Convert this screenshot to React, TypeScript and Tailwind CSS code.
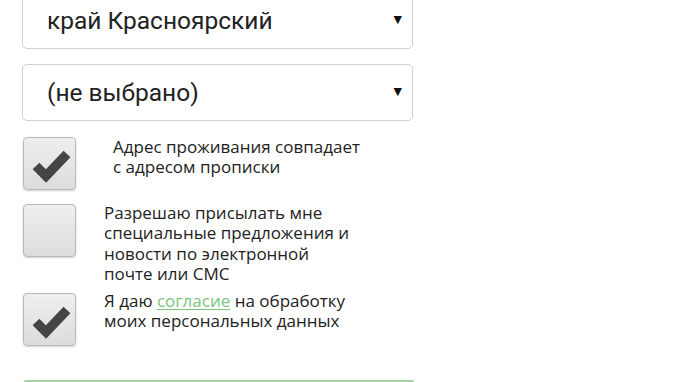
import React from "react";

function Check() {
  return (
    <svg width="53" height="53" viewBox="0 0 53 53" className="absolute left-0 top-0">
      <polyline
        points="12,28 22,38 43,16"
        fill="none"
        stroke="#444444"
        strokeWidth="9.5"
        strokeLinejoin="miter"
        strokeLinecap="butt"
      />
    </svg>
  );
}

function Box({ checked }: { checked?: boolean }) {
  return (
    <div className="relative w-[53px] h-[53px] shrink-0 rounded-[4px] border border-[#b9b9b9] bg-gradient-to-b from-[#efefef] to-[#dcdcdc] shadow-[0_1px_2px_rgba(0,0,0,0.18)]">
      {checked && <Check />}
    </div>
  );
}

function Select({ label, className }: { label: string; className?: string }) {
  return (
    <div
      className={
        "flex items-center justify-between h-[57px] w-[391px] rounded-[5px] border border-[#cfcfcf] bg-white pl-[24px] pr-[10px] " +
        (className ?? "")
      }
    >
      <span className="font-['Roboto',sans-serif] text-[24.5px] text-[#222] pt-[1px]">{label}</span>
      <span className="text-[11px] text-[#111] font-['DejaVu_Sans',sans-serif]">▼</span>
    </div>
  );
}

export default function App() {
  return (
    <div className="w-[700px] h-[382px] overflow-hidden bg-white">
      <div className="pl-[22px] flex flex-col font-['Open_Sans',sans-serif] text-[17px] text-[#222] leading-[20.3px]">
        <Select label="край Красноярский" className="-mt-[8px]" />
        <Select label="(не выбрано)" className="mt-[15px]" />

        <div className="flex items-start mt-[16px] pl-[1px]">
          <Box checked />
          <div className="ml-[37px]">
            Адрес проживания совпадает
            <br />с адресом прописки
          </div>
        </div>

        <div className="flex items-start mt-[14px] pl-[1px]">
          <Box />
          <div className="ml-[28px] -mt-[1px]">
            Разрешаю присылать мне
            <br />
            специальные предложения и
            <br />
            новости по электронной
            <br />
            почте или СМС
          </div>
        </div>

        <div className="flex items-start mt-[9px] pl-[1px]">
          <Box checked />
          <div className="ml-[28px] -mt-[2px]">
            Я даю{" "}
            <span className="text-[#7cc47c] underline underline-offset-2">согласие</span> на обработку
            <br />
            моих персональных данных
          </div>
        </div>

        <div className="mt-[34px] ml-[1px] w-[392px] h-[50px] rounded-[4px] border-2 border-[#a3d3a3] bg-[#f3faf3]" />
      </div>
    </div>
  );
}
